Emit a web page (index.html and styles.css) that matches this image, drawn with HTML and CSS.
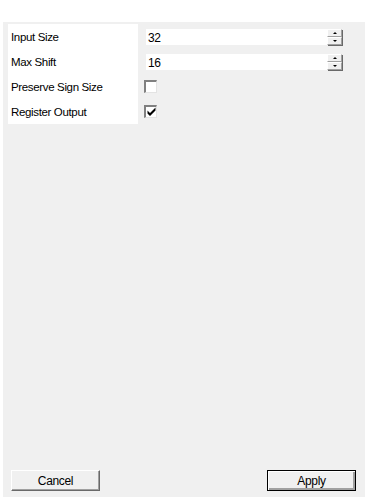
FILE: index.html
```html
<!DOCTYPE html>
<html lang="en">
<head>
<meta charset="UTF-8">
<meta name="viewport" content="width=device-width, initial-scale=1.0">
<title>Shifter Properties</title>
<link rel="stylesheet" href="styles.css">
</head>
<body>
<div class="dialog">
  <div class="props">
    <div class="labels">
      <div class="label">Input Size</div>
      <div class="label">Max Shift</div>
      <div class="label">Preserve Sign Size</div>
      <div class="label">Register Output</div>
    </div>
    <div class="values">
      <div class="row">
        <div class="spin">
          <div class="field">32</div>
          <div class="arrows">
            <div class="arrow up"></div>
            <div class="arrow down"></div>
          </div>
        </div>
      </div>
      <div class="row">
        <div class="spin">
          <div class="field">16</div>
          <div class="arrows">
            <div class="arrow up"></div>
            <div class="arrow down"></div>
          </div>
        </div>
      </div>
      <div class="row">
        <div class="check"></div>
      </div>
      <div class="row">
        <div class="check checked">
          <svg width="9" height="9" viewBox="0 0 9 9"><path d="M0.5 3.5 L3 6 L8.5 0.5 L8.5 3.5 L3 9 L0.5 6.5 Z" fill="#000"/></svg>
        </div>
      </div>
    </div>
  </div>

  <div class="buttons">
    <div class="button">Cancel</div>
    <div class="button default">Apply</div>
  </div>
</div>
</body>
</html>
```

FILE: styles.css
```css
* {
  margin: 0;
  padding: 0;
  box-sizing: border-box;
}

body {
  background: #fff;
  font-family: "Liberation Sans", Arial, sans-serif;
  font-size: 11.5px;
  letter-spacing: -0.35px;
  color: #000;
}

/* Grey dialog area */
.dialog {
  margin: 22px 0 0 3px;
  width: 362px;
  height: 475px;
  background: #f0f0f0;
  display: flex;
  flex-direction: column;
  justify-content: space-between;
  padding: 2px 0 6px 0;
}

.props {
  display: flex;
  padding-left: 5px;
}

.labels {
  width: 130px;
  background: #fff;
}

.label {
  height: 25px;
  line-height: 25px;
  padding-left: 3px;
  position: relative;
  top: 1px;
}

.values {
  padding-left: 8px;
}

.row {
  height: 25px;
  display: flex;
  align-items: center;
}

/* Spinner fields */
.spin {
  display: flex;
  height: 16px;
}

.field {
  width: 181px;
  height: 16px;
  background: #fff;
  line-height: 18px;
  padding-left: 2px;
  font-size: 12px;
}

.arrows {
  display: flex;
  flex-direction: column;
}

.arrow {
  width: 15px;
  height: 8px;
  background: #f0f0f0;
  border-top: 1px solid #fff;
  border-left: 1px solid #fff;
  border-right: 1px solid #a0a0a0;
  border-bottom: 1px solid #a0a0a0;
  box-shadow: 1px 1px 0 #696969;
  position: relative;
}

.arrow::after {
  content: '';
  position: absolute;
  left: 5px;
  width: 0;
  height: 0;
  border-left: 2px solid transparent;
  border-right: 2px solid transparent;
}

.arrow.up::after {
  top: 2px;
  border-bottom: 2px solid #000;
}

.arrow.down::after {
  top: 2px;
  border-top: 2px solid #000;
}

/* Checkboxes */
.check {
  width: 13px;
  height: 13px;
  background: #fff;
  border-top: 2px solid #808080;
  border-left: 2px solid #808080;
  border-right: 1px solid #e3e3e3;
  border-bottom: 1px solid #e3e3e3;
  display: flex;
  align-items: center;
  justify-content: center;
  margin-left: -2px;
  margin-top: -1px;
}

/* Bottom buttons */
.buttons {
  display: flex;
  justify-content: space-between;
  padding: 0 9px 0 8px;
}

.button {
  width: 89px;
  height: 21px;
  background: #f0f0f0;
  border-top: 1px solid #fff;
  border-left: 1px solid #fff;
  border-right: 1px solid #696969;
  border-bottom: 1px solid #696969;
  box-shadow: inset -1px -1px 0 #a0a0a0;
  text-align: center;
  line-height: 21px;
  font-size: 12px;
}

.button.default {
  border: 1px solid #000;
  box-shadow: inset 1px 1px 0 #fff, inset -2px -2px 0 #a0a0a0;
}
```
